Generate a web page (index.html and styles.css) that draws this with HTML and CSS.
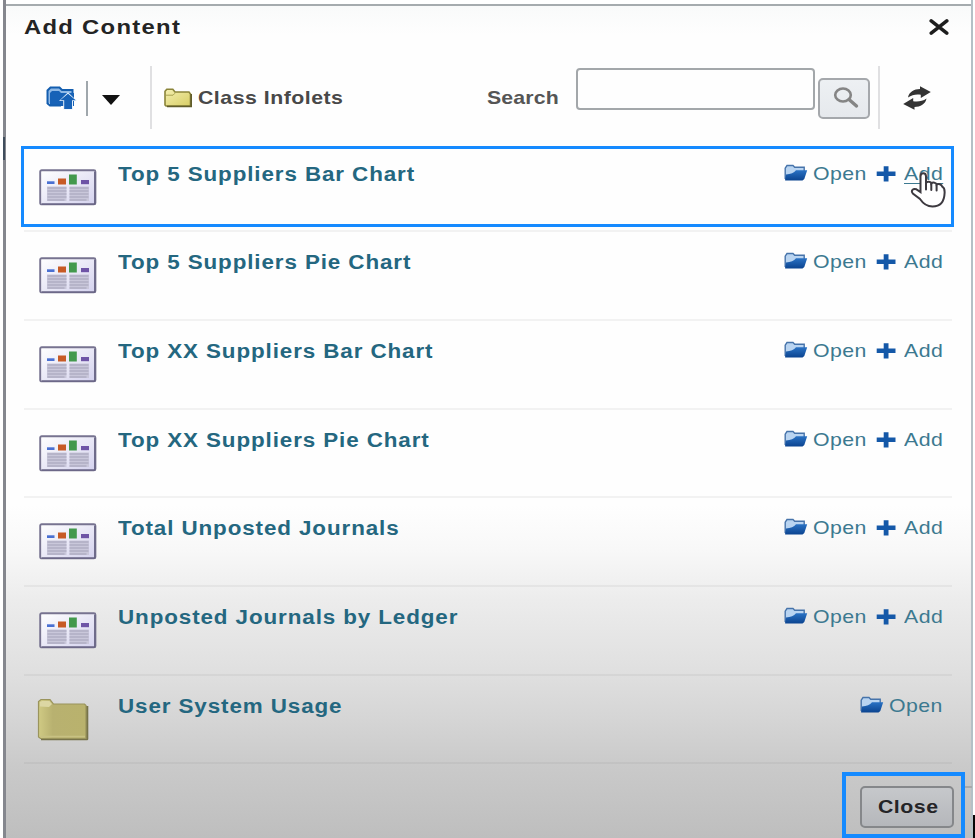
FILE: index.html
```html
<!DOCTYPE html>
<html lang="en">
<head>
<meta charset="utf-8">
<title>Add Content</title>
<link rel="stylesheet" href="styles.css">
</head>
<body>
<svg class="defs" width="0" height="0" aria-hidden="true">
  <defs>
    <linearGradient id="g-yellow" x1="0" y1="0" x2="1" y2="1"><stop offset="0" stop-color="#f4efb0"/><stop offset="1" stop-color="#d8ce66"/></linearGradient>
    <linearGradient id="g-olive" x1="0" y1="0" x2="1" y2="0"><stop offset="0" stop-color="#d0ca84"/><stop offset=".3" stop-color="#b8b170"/><stop offset="1" stop-color="#b9b26d"/></linearGradient>
    <linearGradient id="g-blue" x1="0" y1="0" x2="0" y2="1"><stop offset="0" stop-color="#2a72c4"/><stop offset="1" stop-color="#0b438f"/></linearGradient>
    <linearGradient id="g-page" x1="0" y1="0" x2="1" y2="1"><stop offset="0" stop-color="#fff"/><stop offset="1" stop-color="#d4d2ee"/></linearGradient>
    <symbol id="report" viewBox="0 0 58 37">
      <rect x="1.200" y="1.200" width="55.200" height="34.200" rx="1.500" fill="url(#g-page)" stroke="#777390" stroke-width="1.900"/>
      <path d="M55.800 3v32H3" fill="none" stroke="#625f80" stroke-width="1.200"/>
      <path d="M8 17.500h19.500V32H8zM30.500 17.500H50V32H30.500z" fill="#c9c7da"/>
      <rect x="8" y="12.300" width="7.500" height="2.700" fill="#4a70d2"/>
      <rect x="19" y="9.500" width="8" height="6" fill="#c75a25"/>
      <rect x="30" y="5.500" width="7.800" height="10" fill="#43994d"/>
      <rect x="42" y="11" width="8" height="4.200" fill="#6e54a6"/>
      <path d="M8.500 19h19M8.500 22h19M8.500 25h19M8.500 28h19M8.500 31h17M30.500 19h19M30.500 22h19M30.500 25h19M30.500 28h19M30.500 31h17" stroke="#b0aec4" stroke-width="1.500"/>
    </symbol>
    <symbol id="open" viewBox="0 0 24 18">
      <path d="M1.200 15V4.200L3 1.500h6l1.700 1.700h9.500v4" fill="#b9d4f1" stroke="#4673aa" stroke-width="1.400"/>
      <path d="M1 16.200 2 10.500Q9 10 12 6.200h11.200L20.300 15l-1.800 1.600H1.500z" fill="url(#g-blue)"/>
    </symbol>
    <symbol id="plus" viewBox="0 0 20 18">
      <path d="M7.700 1.200h4.800v5.300H19.500v4.600H12.500v5.400H7.700v-5.400H.700V6.500h7z" fill="#1458a8"/>
    </symbol>
  </defs>
</svg>
<main class="dialog">
  <header class="head">
    <h1><span class="wide">Add Content</span></h1>
    <svg class="x" viewBox="0 0 18 14"><path d="M2 1.500 16 12.500M16 1.500 2 12.500" stroke="#1d1d1d" stroke-width="3.200" stroke-linecap="round"/></svg>
  </header>
  <div class="toolbar">
    <svg class="up" viewBox="0 0 31 24">
      <path d="M1.500 18V4.500L4.500 1.500h9L16 4h10.500v8" fill="#8fb9e6" stroke="#145eaf" stroke-width="2"/>
      <path d="M4 20V7L6 5h7l2 2h13v13z" fill="#1762b7"/>
      <path d="M1.500 17.500 4 19.500h11" fill="none" stroke="#145eaf" stroke-width="2"/>
      <path d="m22 6.200 9 8.700h-4V23.500H17.200v-8.600h-4.200z" fill="#e4f0fb"/>
      <path d="m22 7.700 7.700 6.600H26V23H18.200v-8.700h-4z" fill="#1762b7"/>
    </svg>
    <i class="rule short"></i>
    <i class="caret"></i>
    <i class="rule tall"></i>
    <svg class="folder" viewBox="0 0 30 20">
      <path d="M2 17V3.200L3.800 1.200h6L12 4h14l1.500 2v12H3z" fill="url(#g-yellow)" stroke="#8a8439" stroke-width="1.600"/>
      <path d="M3 7.200h7l2-2" fill="none" stroke="#a9a250"/><path d="M28.200 6v12.500H4" fill="none" stroke="#605c2b" stroke-width="1.600"/>
    </svg>
    <span class="crumb"><span class="wide">Class Infolets</span></span>
    <label class="label" for="q"><span class="wide">Search</span></label>
    <input class="field" id="q" type="text">
    <button class="go" aria-label="Search"><svg viewBox="0 0 28 22"><ellipse cx="11" cy="8" rx="7.800" ry="6.500" fill="none" stroke="#858585" stroke-width="2.600"/><path d="m17 12.500 7.500 6.500" stroke="#858585" stroke-width="3.400" stroke-linecap="round"/></svg></button>
    <i class="rule tall last"></i>
    <svg class="sync" viewBox="0 0 28 24"><path d="M5 11.500C6 6 11 3 17 3V.300L27.800 6l-10 6V8.700C13 8 9 8.700 5 11.500zM23.500 12.500c-1 5.500-6 8.500-12 8.500v2.700L.200 18l10-6v3.300c5 .700 9.300 0 13.300-2.800z" fill="#333"/></svg>
  </div>
  <ul class="list">
    <li class="row"><svg class="pic"><use href="#report"/></svg><a class="name"><span class="wide">Top 5 Suppliers Bar Chart</span></a><div class="acts"><svg class="oi"><use href="#open"/></svg><a class="open"><span class="wide">Open</span></a><svg class="pi"><use href="#plus"/></svg><a class="add hover"><span class="wide">Add</span></a></div></li>
    <li class="row"><svg class="pic"><use href="#report"/></svg><a class="name"><span class="wide">Top 5 Suppliers Pie Chart</span></a><div class="acts"><svg class="oi"><use href="#open"/></svg><a class="open"><span class="wide">Open</span></a><svg class="pi"><use href="#plus"/></svg><a class="add"><span class="wide">Add</span></a></div></li>
    <li class="row"><svg class="pic"><use href="#report"/></svg><a class="name"><span class="wide">Top XX Suppliers Bar Chart</span></a><div class="acts"><svg class="oi"><use href="#open"/></svg><a class="open"><span class="wide">Open</span></a><svg class="pi"><use href="#plus"/></svg><a class="add"><span class="wide">Add</span></a></div></li>
    <li class="row"><svg class="pic"><use href="#report"/></svg><a class="name"><span class="wide">Top XX Suppliers Pie Chart</span></a><div class="acts"><svg class="oi"><use href="#open"/></svg><a class="open"><span class="wide">Open</span></a><svg class="pi"><use href="#plus"/></svg><a class="add"><span class="wide">Add</span></a></div></li>
    <li class="row"><svg class="pic"><use href="#report"/></svg><a class="name"><span class="wide">Total Unposted Journals</span></a><div class="acts"><svg class="oi"><use href="#open"/></svg><a class="open"><span class="wide">Open</span></a><svg class="pi"><use href="#plus"/></svg><a class="add"><span class="wide">Add</span></a></div></li>
    <li class="row"><svg class="pic"><use href="#report"/></svg><a class="name"><span class="wide">Unposted Journals by Ledger</span></a><div class="acts"><svg class="oi"><use href="#open"/></svg><a class="open"><span class="wide">Open</span></a><svg class="pi"><use href="#plus"/></svg><a class="add"><span class="wide">Add</span></a></div></li>
    <li class="row">
      <svg class="bigfolder" viewBox="0 0 52 44"><path d="M4 41h46V8" fill="none" stroke="#77734a" stroke-width="2.600" stroke-linejoin="round"/><path d="M1.500 39V3.500L4 1.500h9L16.500 6h31L49 7.500v33H3.500z" fill="url(#g-olive)" stroke="#9a945c" stroke-width="1.200"/><path d="M3 8.500V4L5 3h7.500L15 6 12 9z" fill="#dcd7a4"/><path d="M3.500 38.500h44.500" stroke="#c8c183" stroke-width="1.500"/></svg>
      <a class="name"><span class="wide">User System Usage</span></a><div class="acts"><svg class="oi"><use href="#open"/></svg><a class="open end"><span class="wide">Open</span></a></div></li>
  </ul>
  <footer class="foot"><button class="close"><span class="wide">Close</span></button></footer>
</main>
<div class="mark mark-row"></div>
<div class="mark mark-close"></div>
<i class="edge-left"></i><i class="edge-line"></i><i class="edge-corner"></i>
<svg class="hand" viewBox="0 0 36 38"><path d="M10.500 20V5.500c0-4.500 5.500-4.500 5.500 0V12c1-2 5-1.500 5.300.500 1.500-1.500 5-1 5.300 1 2-1.300 5 0 5.700 2.200 2 1 2.500 3 2.300 6.300C34.300 30 30.500 35.500 22.500 35.500c-6 0-9.500-3-12.500-7.500L2.800 22.500C.500 19.500 3 17.200 6.500 18.300L10.500 21z" fill="#fff" stroke="#3d3a40" stroke-width="2"/><path d="M16 12v6.500M21.300 13v6M26.600 14v5.500" stroke="#3d3a40" stroke-width="2" stroke-linecap="round"/></svg>
</body>
</html>
```
FILE: styles.css
```css
* { box-sizing: border-box; }
html, body { height: 838px; overflow: hidden; }
body { margin: 0; position: relative; background: #fff; font-family: "Liberation Sans", Arial, sans-serif; }
.defs { position: absolute; }
svg, .rule, .caret { display: block; flex: none; }

.dialog {
  margin: 0 2px 0 3px;
  height: 838px;
  padding-top: 7px;
  border-left: 3px solid #85878e;
  border-right: 2px solid #b4c0c6;
  background:
    linear-gradient(#fff 4px, #a5abae 4px, #a5abae 6px, transparent 6px),
    linear-gradient(#f9fafa 6px, #fefefe 35px, #fefefe 505px, #f8f8f8 550px, #ececec 600px, #dfdfdf 675px, #d5d5d5 720px, #cacaca 765px, #bebebe 838px);
}
.wide { display: inline-block; white-space: nowrap; transform: scaleX(1.12); transform-origin: 0 50%; }

.head { display: flex; justify-content: space-between; height: 56px; padding: 8px 22px 0 18px; }
h1 { margin: 0; font-size: 20px; line-height: 24px; letter-spacing: 1.1px; color: #242424; }
h1 .wide { transform: scaleX(1.19); }
.x { width: 20px; height: 16px; margin-top: 4px; }

.toolbar { display: flex; height: 80.500px; padding-left: 40px; font-weight: bold; font-size: 19px; line-height: 24px; }
.up { width: 31px; height: 24px; margin-top: 23px; }
.rule { width: 2px; background: #e0e0e2; }
.rule.short { height: 35px; margin: 18px 0 0 9px; background: #a0a7ac; }
.rule.tall { height: 63px; margin: 3px 0 0 30px; }
.caret { width: 18px; height: 10px; margin: 32px 0 0 14px; background: #111; clip-path: polygon(0 0, 100% 0, 50% 100%); }
.folder { width: 30px; height: 20px; margin: 25px 0 0 11px; }
.crumb { width: 289px; margin: 23px 0 0 5px; color: #484848; letter-spacing: .45px; }
.label { width: 89px; margin-top: 23px; color: #555; letter-spacing: .15px; }
.field { width: 239px; height: 42px; margin-top: 5px; padding: 0 8px; border: 2px solid #a3a7aa; border-radius: 4px; background: #fefefe; }
.go { width: 52px; height: 41px; margin: 15px 0 0 3px; padding: 0 0 1px 12px; border: 2px solid #a5a8ac; border-radius: 5px; background: linear-gradient(#edf0f3, #e6e9ed); }
.go svg { width: 28px; height: 22px; }
.rule.tall.last { margin-left: 8px; }
.sync { width: 28px; height: 24px; margin: 23px 0 0 23px; }

.list { margin: 0 19px 0 18px; padding: 0; list-style: none; }
.row { display: flex; height: 88.700px; border-bottom: 2px solid rgba(100, 100, 100, .08); }
.pic { width: 58px; height: 37px; margin: 25px 0 0 15px; }
.bigfolder { width: 52px; height: 44px; margin: 22px 6px 0 13px; overflow: visible; }
.bigfolder + .name { margin-left: 23px; }
.name { flex: 1; margin: 18px 0 0 21px; font-size: 20px; font-weight: bold; line-height: 24px; letter-spacing: .8px; color: #246780; }
.acts { display: flex; padding: 18px 10px 0 0; font-size: 19px; line-height: 24px; letter-spacing: .4px; color: #3c7990; }
.oi { width: 24px; height: 18px; margin: 2px 5px 0 0; }
.open { width: 63px; }
.open.end { width: 53px; }
.pi { width: 20px; height: 18px; margin: 3px 8px 0 0; }
.add { width: 38px; }
.add.hover .wide { text-decoration: underline; text-underline-offset: 3px; }

.foot { display: flex; justify-content: flex-end; padding: 22px 17px 0 0; }
.close { width: 94px; height: 42px; padding: 0 0 1px 16px; border: 2px solid #85878a; border-radius: 5px; background: linear-gradient(#c6c8cb, #b5b7bb); font: bold 19px/24px "Liberation Sans", Arial, sans-serif; letter-spacing: .45px; color: #242427; text-align: left; }

.mark { position: absolute; border: 3px solid #158aff; }
.mark-row { left: 21px; top: 146px; width: 933px; height: 81px; }
.mark-close { left: 842px; top: 772px; width: 123px; height: 66px; border-width: 4px; }
.hand { position: absolute; left: 910px; top: 171px; width: 36px; height: 38px; }
.edge-left { position: absolute; left: 3px; top: 137px; width: 2px; height: 23px; background: #3f4d5c; }
.edge-line { position: absolute; left: 965px; top: 786px; width: 7px; height: 2px; background: #a7a9ab; }
.edge-corner { position: absolute; right: 0; bottom: 0; width: 2px; height: 23px; background: #050505; }
```
